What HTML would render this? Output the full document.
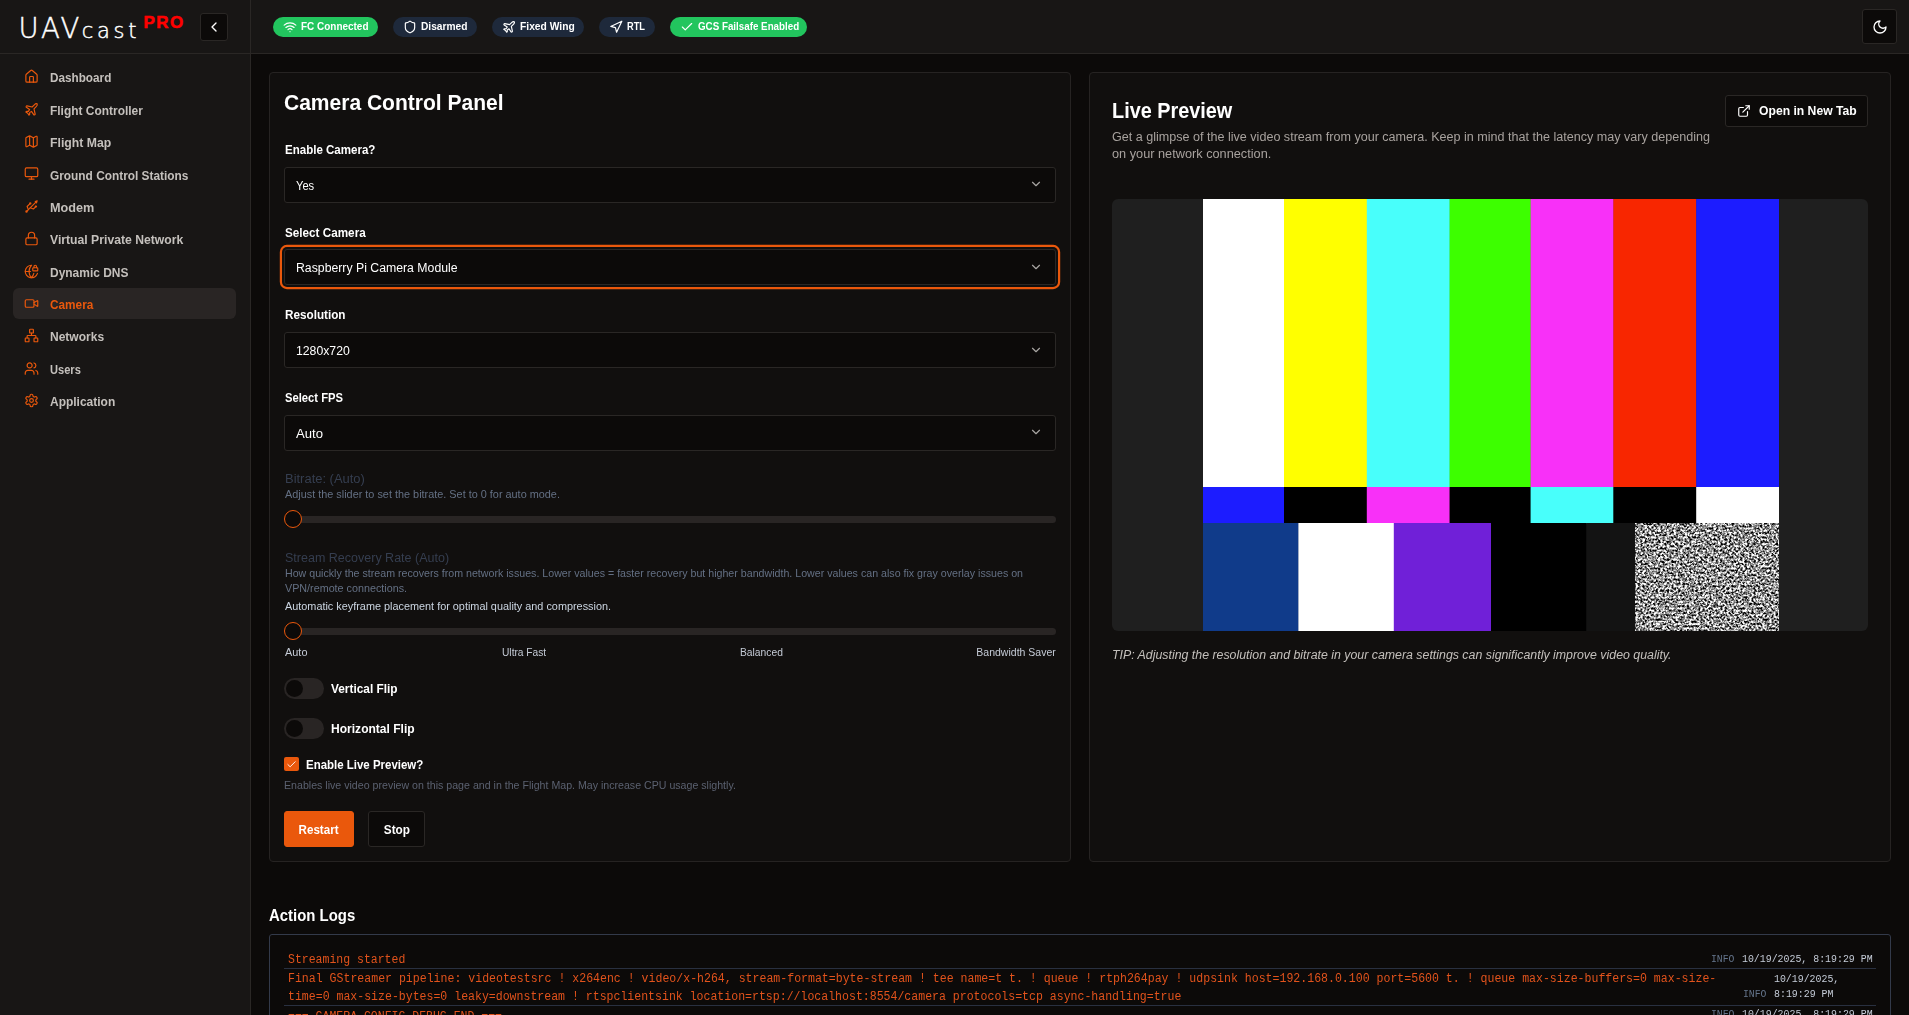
<!DOCTYPE html>
<html lang="en"><head>
<meta charset="utf-8">
<title>UAVcast PRO - Camera</title>
<style>
*{box-sizing:border-box;margin:0;padding:0}
html,body{width:1909px;height:1015px;overflow:hidden;background:#0c0a09;color:#fafaf9;font-family:"Liberation Sans",sans-serif;font-size:13px}
.abs{position:absolute}
#side{position:absolute;left:0;top:0;width:251px;height:1015px;background:#181615;border-right:1px solid #2a2725}
#top{position:absolute;left:251px;top:0;width:1658px;height:54px;background:#181615;border-bottom:1px solid #2a2725}
#sidehead{position:absolute;left:0;top:0;width:250px;height:54px;border-bottom:1px solid #2a2725}
.logo{position:absolute;left:18.500px;top:11.600px;-webkit-text-stroke:0.450px #fff;white-space:nowrap;color:#fff;font-family:"DejaVu Sans Light","DejaVu Sans","Liberation Sans",sans-serif;font-weight:200}
.logo .u{font-size:27.500px;letter-spacing:2.400px}
.logo .c{font-size:21px;letter-spacing:3.700px}
.pro{position:absolute;left:143.500px;top:12.700px;-webkit-text-stroke:0.500px #ff0000;color:#ff0000;font-weight:bold;font-size:17px;letter-spacing:1.500px;font-family:"Liberation Sans",sans-serif}
.ibtn{position:absolute;background:#0c0a09;border:1px solid #2a2725;border-radius:3px}
.nav{position:absolute;left:13px;width:223px;height:31.500px;border-radius:6px;color:#c4c0bc;font-weight:bold;font-size:12.500px;line-height:33.200px}
.nav svg{position:absolute;left:10.500px;top:8.200px;width:15px;height:15px;stroke:#ea580c;fill:none;stroke-width:1.900;stroke-linecap:round;stroke-linejoin:round}
.nav span{position:absolute;left:37px;top:0.700px;white-space:nowrap}
.nav.act{background:#292524;color:#ea580c}
.badge{position:absolute;top:17px;height:20px;border-radius:10px;color:#fff;font-weight:bold;font-size:11px;line-height:19px;white-space:nowrap}
.badge svg{position:absolute;left:10px;top:3px;width:14px;height:14px;stroke:#fff;fill:none;stroke-width:2;stroke-linecap:round;stroke-linejoin:round}
.badge span{position:absolute;left:28px;top:0}
.g{background:#22c55e}.s{background:#1e293b}
.card{position:absolute;background:#110f0e;border:1px solid #262322;border-radius:4px}

.h1{font-size:21.500px;font-weight:bold;color:#fff;line-height:30px;white-space:nowrap}
.h2{font-size:22px;font-weight:bold;color:#fff;line-height:26px;white-space:nowrap}
.h3{font-size:16.500px;font-weight:bold;color:#fff;line-height:20px;white-space:nowrap}
.lbl{position:absolute;left:284.700px;font-size:12.500px;font-weight:bold;color:#fff;line-height:20px;white-space:nowrap}
.lb2{font-size:12.500px;font-weight:bold;color:#fff;line-height:20px;white-space:nowrap}
.sel{position:absolute;left:284px;width:771.700px;height:35.500px;background:#0c0a09;border:1px solid #2a2725;border-radius:3px;font-size:12.500px;line-height:36.600px;color:#fff}
.sel span{position:absolute;left:10.700px;top:0;white-space:nowrap}
.sel .chev{position:absolute;right:11.600px;top:9.300px;width:14px;height:14px;fill:none;stroke:#a8a5a2;stroke-width:2;stroke-linecap:round;stroke-linejoin:round}
.sel.foc{box-shadow:0 0 0 2px #110f0e,0 0 0 4.200px #ea580c}
.dim{font-size:12.500px;color:#353e50;line-height:16px;white-space:nowrap}
.sm{font-size:10.700px;line-height:14px;white-space:nowrap}
.tick{color:#c5cbd6}
.track{position:absolute;left:284.500px;width:771.500px;height:7px;border-radius:4px;background:#292524}
.thumb{position:absolute;left:283.500px;width:18px;height:18px;border-radius:50%;background:#0c0a09;border:1.500px solid #ea580c}
.tog{position:absolute;left:284px;width:40px;height:21px;border-radius:10.500px;background:#292524}
.tog i{position:absolute;left:2px;top:2px;width:17px;height:17px;border-radius:50%;background:#0c0a09}
.chk{position:absolute;left:284px;width:15px;height:14px;border-radius:2px;background:#ea580c}
.chk svg{position:absolute;left:2px;top:1.500px;width:11px;height:11px;fill:none;stroke:#fff;stroke-width:2;stroke-linecap:round;stroke-linejoin:round}
.btn{position:absolute;height:35.500px;border-radius:3px;background:#0c0a09;border:1px solid #2a2725;color:#fff;font-weight:bold;font-size:12.500px;line-height:36.500px;text-align:center;white-space:nowrap}
.btn.pri{background:#ea580c;border-color:#ea580c}
.desc{font-size:12.500px;line-height:17.500px;color:#a8a29e;white-space:nowrap}
.tip{font-size:12.500px;font-style:italic;color:#c4c0bc;line-height:16px;white-space:nowrap}

.lg{font-family:"Liberation Mono",monospace;font-size:12px;line-height:16px;color:#e2531c;white-space:nowrap}
.li{color:#64748b;font-family:"Liberation Mono",monospace;font-size:10.500px;line-height:16px;white-space:nowrap}
.lt{font-family:"Liberation Mono",monospace;font-size:10.500px;line-height:16px;color:#c5ccd8;white-space:nowrap}
.sep{left:284px;width:1592px;height:1px;background:#293040}
</style>
</head>
<body>
<div id="side">
  <div id="sidehead">
    <div class="logo"><span class="u">UAV</span><span class="c">cast</span></div>
    <div class="pro">PRO</div>
    <div class="ibtn" style="left:200px;top:12.500px;width:28px;height:28px"><svg width="16" height="16" viewBox="0 0 24 24" style="position:absolute;left:5px;top:5px;fill:none;stroke:#fff;stroke-width:2;stroke-linecap:round;stroke-linejoin:round"><path d="m15 18-6-6 6-6"></path></svg></div>
  </div>
  <div class="nav" style="top:61.1px"><svg viewBox="0 0 24 24"><path d="M15 21v-8a1 1 0 0 0-1-1h-4a1 1 0 0 0-1 1v8"></path><path d="M3 10a2 2 0 0 1 .709-1.528l7-5.999a2 2 0 0 1 2.582 0l7 5.999A2 2 0 0 1 21 10v9a2 2 0 0 1-2 2H5a2 2 0 0 1-2-2z"></path></svg><span style="transform: scaleX(0.9388); transform-origin: 0px 50%;">Dashboard</span></div>
  <div class="nav" style="top:93.5px"><svg viewBox="0 0 24 24"><path d="M17.8 19.2 16 11l3.500-3.500C21 6 21.500 4 21 3c-1-.5-3 0-4.500 1.500L13 8 4.800 6.200c-.5-.1-.9.100-1.100.5l-.3.5c-.2.500-.1 1 .3 1.300L9 12l-2 3H4l-1 1 3 2 2 3 1-1v-3l3-2 3.500 5.300c.3.400.8.500 1.300.3l.5-.2c.4-.3.600-.7.500-1.200z"></path></svg><span style="top: 1.7px; transform: scaleX(0.9556); transform-origin: 0px 50%;">Flight Controller</span></div>
  <div class="nav" style="top:125.9px"><svg viewBox="0 0 24 24"><path d="M14.106 5.553a2 2 0 0 0 1.788 0l3.659-1.830A1 1 0 0 1 21 4.619v12.764a1 1 0 0 1-.553.894l-4.553 2.277a2 2 0 0 1-1.788 0l-4.212-2.106a2 2 0 0 0-1.788 0l-3.659 1.830A1 1 0 0 1 3 19.381V6.618a1 1 0 0 1 .553-.894l4.553-2.277a2 2 0 0 1 1.788 0z"></path><path d="M15 5.764v15"></path><path d="M9 3.236v15"></path></svg><span style="transform: scaleX(0.9792); transform-origin: 0px 50%;">Flight Map</span></div>
  <div class="nav" style="top:158.3px"><svg viewBox="0 0 24 24"><rect width="20" height="14" x="2" y="3" rx="2"></rect><line x1="8" x2="16" y1="21" y2="21"></line><line x1="12" x2="12" y1="17" y2="21"></line></svg><span style="top: 1.7px; transform: scaleX(0.9491); transform-origin: 0px 50%;">Ground Control Stations</span></div>
  <div class="nav" style="top:190.7px"><svg viewBox="0 0 24 24"><circle cx="10" cy="7" r="1"></circle><circle cx="4" cy="20" r="1"></circle><path d="M4.700 19.300 19 5"></path><path d="m21 3-3 1 2 2Z"></path><path d="M9.260 7.680 5 12l2 5"></path><path d="m10 14 5 2 3.500-3.500"></path><path d="m18 12 1-1 1 1-1 1Z"></path></svg><span style="top: 1.7px; transform: scaleX(1.0126); transform-origin: 0px 50%;">Modem</span></div>
  <div class="nav" style="top:223.1px"><svg viewBox="0 0 24 24"><rect width="18" height="11" x="3" y="11" rx="2" ry="2"></rect><path d="M7 11V7a5 5 0 0 1 10 0v4"></path></svg><span style="transform: scaleX(0.9756); transform-origin: 0px 50%;">Virtual Private Network</span></div>
  <div class="nav" style="top:255.5px"><svg viewBox="0 0 24 24"><path d="M15.686 15A14.500 14.500 0 0 1 12 22a14.500 14.500 0 0 1 0-20 10 10 0 1 0 9.542 13"></path><path d="M2 12h8.500"></path><path d="M20 6V4a2 2 0 1 0-4 0v2"></path><rect width="8" height="5" x="14" y="6" rx="1"></rect></svg><span style="top: 1.7px; transform: scaleX(0.9575); transform-origin: 0px 50%;">Dynamic DNS</span></div>
  <div class="nav act" style="top:287.9px"><svg viewBox="0 0 24 24"><path d="m16 13 5.223 3.482a.5.500 0 0 0 .777-.416V7.870a.5.500 0 0 0-.752-.432L16 10.500"></path><rect x="2" y="6" width="14" height="12" rx="2"></rect></svg><span style="transform: scaleX(0.9439); transform-origin: 0px 50%;">Camera</span></div>
  <div class="nav" style="top:320.3px"><svg viewBox="0 0 24 24"><rect x="16" y="16" width="6" height="6" rx="1"></rect><rect x="2" y="16" width="6" height="6" rx="1"></rect><rect x="9" y="2" width="6" height="6" rx="1"></rect><path d="M5 16v-3a1 1 0 0 1 1-1h12a1 1 0 0 1 1 1v3"></path><path d="M12 12V8"></path></svg><span style="transform: scaleX(0.9612); transform-origin: 0px 50%;">Networks</span></div>
  <div class="nav" style="top:352.7px"><svg viewBox="0 0 24 24"><path d="M16 21v-2a4 4 0 0 0-4-4H6a4 4 0 0 0-4 4v2"></path><circle cx="9" cy="7" r="4"></circle><path d="M22 21v-2a4 4 0 0 0-3-3.870"></path><path d="M16 3.130a4 4 0 0 1 0 7.750"></path></svg><span style="top: 1.7px; transform: scaleX(0.8863); transform-origin: 0px 50%;">Users</span></div>
  <div class="nav" style="top:385.1px"><svg viewBox="0 0 24 24"><path d="M12.220 2h-.44a2 2 0 0 0-2 2v.18a2 2 0 0 1-1 1.730l-.43.250a2 2 0 0 1-2 0l-.15-.08a2 2 0 0 0-2.730.730l-.22.380a2 2 0 0 0 .73 2.730l.15.100a2 2 0 0 1 1 1.720v.510a2 2 0 0 1-1 1.740l-.15.090a2 2 0 0 0-.73 2.730l.22.380a2 2 0 0 0 2.730.730l.15-.08a2 2 0 0 1 2 0l.43.250a2 2 0 0 1 1 1.730V20a2 2 0 0 0 2 2h.44a2 2 0 0 0 2-2v-.18a2 2 0 0 1 1-1.730l.43-.25a2 2 0 0 1 2 0l.15.080a2 2 0 0 0 2.730-.73l.22-.39a2 2 0 0 0-.73-2.730l-.15-.08a2 2 0 0 1-1-1.740v-.5a2 2 0 0 1 1-1.740l.15-.09a2 2 0 0 0 .73-2.730l-.22-.38a2 2 0 0 0-2.730-.73l-.15.080a2 2 0 0 1-2 0l-.43-.25a2 2 0 0 1-1-1.730V4a2 2 0 0 0-2-2z"></path><circle cx="12" cy="12" r="3"></circle></svg><span style="transform: scaleX(0.9579); transform-origin: 0px 50%;">Application</span></div>
</div>
<div id="top">
  <div class="badge g" style="left:22px;width:105px"><svg viewBox="0 0 24 24"><path d="M12 20h.01"></path><path d="M2 8.820a15 15 0 0 1 20 0"></path><path d="M5 12.859a10 10 0 0 1 14 0"></path><path d="M8.500 16.429a5 5 0 0 1 7 0"></path></svg><span style="transform: scaleX(0.9053); transform-origin: 0px 50%;">FC Connected</span></div>
  <div class="badge s" style="left:142px;width:84px"><svg viewBox="0 0 24 24"><path d="M20 13c0 5-3.500 7.500-7.660 8.950a1 1 0 0 1-.670-.010C7.500 20.500 4 18 4 13V6a1 1 0 0 1 1-1c2 0 4.500-1.200 6.240-2.720a1.170 1.170 0 0 1 1.520 0C14.510 3.810 17 5 19 5a1 1 0 0 1 1 1z"></path></svg><span style="transform: scaleX(0.9274); transform-origin: 0px 50%;">Disarmed</span></div>
  <div class="badge s" style="left:241px;width:92px"><svg viewBox="0 0 24 24"><path d="M17.800 19.200 16 11l3.500-3.500C21 6 21.500 4 21 3c-1-.5-3 0-4.500 1.500L13 8 4.800 6.200c-.5-.1-.9.100-1.100.5l-.3.500c-.2.500-.1 1 .3 1.300L9 12l-2 3H4l-1 1 3 2 2 3 1-1v-3l3-2 3.500 5.300c.3.400.8.500 1.300.300l.5-.2c.4-.3.600-.7.500-1.200z"></path></svg><span style="transform: scaleX(0.9338); transform-origin: 0px 50%;">Fixed Wing</span></div>
  <div class="badge s" style="left:348px;width:56px"><svg viewBox="0 0 24 24"><polygon points="3 11 22 2 13 21 11 13 3 11"></polygon></svg><span style="transform: scaleX(0.8415); transform-origin: 0px 50%;">RTL</span></div>
  <div class="badge g" style="left:419px;width:137px"><svg viewBox="0 0 24 24"><path d="M20 6 9 17l-5-5"></path></svg><span style="transform: scaleX(0.89); transform-origin: 0px 50%;">GCS Failsafe Enabled</span></div>
  <div class="ibtn" style="left:1610.5px;top:9px;width:35px;height:35px"><svg width="16" height="16" viewBox="0 0 24 24" style="position:absolute;left:9px;top:9px;fill:none;stroke:#fff;stroke-width:2;stroke-linecap:round;stroke-linejoin:round"><path d="M12 3a6 6 0 0 0 9 9 9 9 0 1 1-9-9Z"></path></svg></div>
</div>
<div class="card" style="left:269px;top:72px;width:802px;height:790px">
</div>
<div class="card" style="left:1089px;top:72px;width:802px;height:790px"></div>
<h1 class="abs h1" style="left: 284px; top: 87.5px; transform: scaleX(0.9772); transform-origin: 0px 50%;">Camera Control Panel</h1>
<div class="lbl" style="top: 140px; transform: scaleX(0.9227); transform-origin: 0px 50%;">Enable Camera?</div><div class="sel" style="top:167px"><span style="transform: scaleX(0.8919); transform-origin: 0px 50%;">Yes</span><svg class="chev" viewBox="0 0 24 24"><path d="m6 9 6 6 6-6"></path></svg></div>
<div class="lbl" style="top: 223px; transform: scaleX(0.9365); transform-origin: 0px 50%;">Select Camera</div><div class="sel foc" style="top:249.300px"><span style="transform: scaleX(0.9814); transform-origin: 0px 50%;">Raspberry Pi Camera Module</span><svg class="chev" viewBox="0 0 24 24"><path d="m6 9 6 6 6-6"></path></svg></div>
<div class="lbl" style="top: 305px; transform: scaleX(0.9366); transform-origin: 0px 50%;">Resolution</div><div class="sel" style="top:332.300px"><span style="transform: scaleX(0.9796); transform-origin: 0px 50%;">1280x720</span><svg class="chev" viewBox="0 0 24 24"><path d="m6 9 6 6 6-6"></path></svg></div>
<div class="lbl" style="top: 388px; transform: scaleX(0.8975); transform-origin: 0px 50%;">Select FPS</div><div class="sel" style="top:415px"><span style="transform: scaleX(1.0498); transform-origin: 0px 50%;">Auto</span><svg class="chev" viewBox="0 0 24 24"><path d="m6 9 6 6 6-6"></path></svg></div>
<div class="abs dim" style="left: 284.5px; top: 471px; transform: scaleX(1.036); transform-origin: 0px 50%;">Bitrate: (Auto)</div>
<div class="abs sm" style="left: 284.5px; top: 487px; color: rgb(100, 112, 132); transform: scaleX(1.017); transform-origin: 0px 50%;">Adjust the slider to set the bitrate. Set to 0 for auto mode.</div>
<div class="track" style="top:516px"></div><div class="thumb" style="top:510px"></div>
<div class="abs dim" style="left: 284.5px; top: 550px; transform: scaleX(1.0009); transform-origin: 0px 50%;">Stream Recovery Rate (Auto)</div>
<div class="abs sm" style="left: 284.5px; top: 566px; color: rgb(100, 112, 132); transform: scaleX(0.9959); transform-origin: 0px 50%;">How quickly the stream recovers from network issues. Lower values = faster recovery but higher bandwidth. Lower values can also fix gray overlay issues on</div><div class="abs sm" style="left: 284.5px; top: 580.7px; color: rgb(100, 112, 132); transform: scaleX(1.0067); transform-origin: 0px 50%;">VPN/remote connections.</div>
<div class="abs sm" style="left: 284.5px; top: 599px; color: rgb(203, 213, 225); transform: scaleX(1.0163); transform-origin: 0px 50%;">Automatic keyframe placement for optimal quality and compression.</div>
<div class="track" style="top:628px"></div><div class="thumb" style="top:622px"></div>
<div class="abs sm tick" style="left: 284.5px; top: 645px; transform: scaleX(1.0227); transform-origin: 0px 50%;">Auto</div>
<div class="abs sm tick" style="left: 501.5px; top: 645px; transform: scaleX(0.9541); transform-origin: 0px 50%;">Ultra Fast</div>
<div class="abs sm tick" style="left: 739.5px; top: 645px; transform: scaleX(0.9624); transform-origin: 0px 50%;">Balanced</div>
<div class="abs sm tick" style="right: 853px; top: 645px; transform: scaleX(0.9838); transform-origin: 100% 50%;">Bandwidth Saver</div>
<div class="tog" style="top:678px"><i></i></div><div class="abs lb2" style="left: 331px; top: 679px; transform: scaleX(0.9491); transform-origin: 0px 50%;">Vertical Flip</div>
<div class="tog" style="top:717.700px"><i></i></div><div class="abs lb2" style="left: 331px; top: 719px; transform: scaleX(0.9641); transform-origin: 0px 50%;">Horizontal Flip</div>
<div class="chk" style="top:757px"><svg viewBox="0 0 24 24"><path d="M20 6 9 17l-5-5"></path></svg></div><div class="abs lb2" style="left: 305.5px; top: 754.5px; transform: scaleX(0.9175); transform-origin: 0px 50%;">Enable Live Preview?</div>
<div class="abs sm" style="left: 283.7px; top: 778px; color: rgb(91, 97, 112); transform: scaleX(0.9935); transform-origin: 0px 50%;">Enables live video preview on this page and in the Flight Map. May increase CPU usage slightly.</div>
<div class="btn pri" style="left:284px;top:811px;width:70px"><span style="display: inline-block; transform: scaleX(0.9285); transform-origin: 50% 50%;">Restart</span></div>
<div class="btn" style="left:368px;top:811px;width:57px"><span style="display: inline-block; transform: scaleX(0.9431); transform-origin: 50% 50%;">Stop</span></div>
<h2 class="abs h2" style="left: 1112px; top: 98px; transform: scaleX(0.9024); transform-origin: 0px 50%;">Live Preview</h2>
<div class="abs desc" style="left: 1112px; top: 128.5px; transform: scaleX(1.0055); transform-origin: 0px 50%;">Get a glimpse of the live video stream from your camera. Keep in mind that the latency may vary depending</div><div class="abs desc" style="left: 1112px; top: 146px; transform: scaleX(1.0189); transform-origin: 0px 50%;">on your network connection.</div>
<div class="btn" style="left:1725px;top:95px;width:143px;height:32px;line-height:30px;text-align:left;padding-left:33px;font-size:13px"><svg viewBox="0 0 24 24" style="position:absolute;left:11px;top:8px;width:14px;height:14px;fill:none;stroke:#fff;stroke-width:2;stroke-linecap:round;stroke-linejoin:round"><path d="M15 3h6v6"></path><path d="M10 14 21 3"></path><path d="M18 13v6a2 2 0 0 1-2 2H5a2 2 0 0 1-2-2V8a2 2 0 0 1 2-2h6"></path></svg><span style="display: inline-block; transform: scaleX(0.9349); transform-origin: 0px 50%;">Open in New Tab</span></div>
<div class="abs" style="left:1112px;top:199px;width:756px;height:432px;background:#1f1f1f;border-radius:6px;overflow:hidden"><svg width="576" height="432" viewBox="0 0 576 432" style="position:absolute;left:91px;top:0"><defs><filter id="nz" x="0" y="0" width="100%" height="100%" color-interpolation-filters="sRGB"><feTurbulence type="fractalNoise" baseFrequency="0.450" numOctaves="2" seed="7" result="t"></feTurbulence><feColorMatrix type="matrix" values="2.700 0 0 0 -0.790  2.700 0 0 0 -0.790  2.700 0 0 0 -0.790  0 0 0 0 1"></feColorMatrix></filter></defs><rect x="0" y="0" width="81.3" height="288.500" fill="#ffffff"></rect><rect x="81" y="0" width="83.1" height="288.500" fill="#ffff00"></rect><rect x="163.8" y="0" width="83.1" height="288.500" fill="#48fffb"></rect><rect x="246.6" y="0" width="81.3" height="288.500" fill="#3dff00"></rect><rect x="327.6" y="0" width="83.1" height="288.500" fill="#f830f8"></rect><rect x="410.4" y="0" width="83.1" height="288.500" fill="#f82600"></rect><rect x="493.2" y="0" width="83.1" height="288.500" fill="#1c1cff"></rect><rect x="0" y="288" width="81.3" height="36.500" fill="#1c1cff"></rect><rect x="81" y="288" width="83.1" height="36.500" fill="#000000"></rect><rect x="163.8" y="288" width="83.1" height="36.500" fill="#f830f8"></rect><rect x="246.6" y="288" width="81.3" height="36.500" fill="#000000"></rect><rect x="327.6" y="288" width="83.1" height="36.500" fill="#48fffb"></rect><rect x="410.4" y="288" width="83.1" height="36.500" fill="#000000"></rect><rect x="493.2" y="288" width="83.1" height="36.500" fill="#ffffff"></rect><rect x="0" y="324" width="95.7" height="108" fill="#103b8a"></rect><rect x="95.4" y="324" width="95.7" height="108" fill="#ffffff"></rect><rect x="190.8" y="324" width="97.5" height="108" fill="#7020d8"></rect><rect x="288" y="324" width="95.7" height="108" fill="#000000"></rect><rect x="383.4" y="324" width="48.9" height="108" fill="#131313"></rect><rect x="432" y="324" width="144" height="108" fill="#808080"></rect><rect x="432" y="324" width="144" height="108" filter="url(#nz)"></rect></svg></div>
<div class="abs tip" style="left: 1112px; top: 647px; transform: scaleX(0.9881); transform-origin: 0px 50%;">TIP: Adjusting the resolution and bitrate in your camera settings can significantly improve video quality.</div>
<h3 class="abs h3" style="left: 269px; top: 905px; transform: scaleX(0.9042); transform-origin: 0px 50%;">Action Logs</h3>
<div class="abs" style="left:269px;top:934px;width:1622px;height:90px;background:#0c0a09;border:1px solid #333a4a;border-radius:3px"></div>
<div class="abs lg" style="left: 288px; top: 951.5px; transform: scaleX(0.9582); transform-origin: 0px 50%;">Streaming started</div>
<div class="abs li" style="left: 1710.5px; top: 951px; transform: scaleX(0.9318); transform-origin: 0px 50%;">INFO</div><div class="abs lt" style="left: 1741.5px; top: 951px; transform: scaleX(0.9421); transform-origin: 0px 50%;">10/19/2025, 8:19:29 PM</div>
<div class="abs sep" style="top:968px"></div>
<div class="abs lg" style="left: 288px; top: 970.5px; transform: scaleX(0.9628); transform-origin: 0px 50%;">Final GStreamer pipeline: videotestsrc ! x264enc ! video/x-h264, stream-format=byte-stream ! tee name=t t. ! queue ! rtph264pay ! udpsink host=192.168.0.100 port=5600 t. ! queue max-size-buffers=0 max-size-</div>
<div class="abs lg" style="left: 288px; top: 988.5px; transform: scaleX(0.9617); transform-origin: 0px 50%;">time=0 max-size-bytes=0 leaky=downstream ! rtspclientsink location=rtsp://localhost:8554/camera protocols=tcp async-handling=true</div>
<div class="abs lt" style="left: 1773.5px; top: 971px; transform: scaleX(0.9421); transform-origin: 0px 50%;">10/19/2025,</div>
<div class="abs li" style="left: 1743px; top: 986px; transform: scaleX(0.9318); transform-origin: 0px 50%;">INFO</div><div class="abs lt" style="left: 1773.5px; top: 986px; transform: scaleX(0.9426); transform-origin: 0px 50%;">8:19:29 PM</div>
<div class="abs sep" style="top:1004.500px"></div>
<div class="abs lg" style="left: 288px; top: 1008.5px; transform: scaleX(0.9586); transform-origin: 0px 50%;">=== CAMERA CONFIG DEBUG END ===</div>
<div class="abs li" style="left: 1710.5px; top: 1006px; transform: scaleX(0.9318); transform-origin: 0px 50%;">INFO</div><div class="abs lt" style="left: 1741.5px; top: 1006px; transform: scaleX(0.9421); transform-origin: 0px 50%;">10/19/2025, 8:19:29 PM</div>


</body></html>
